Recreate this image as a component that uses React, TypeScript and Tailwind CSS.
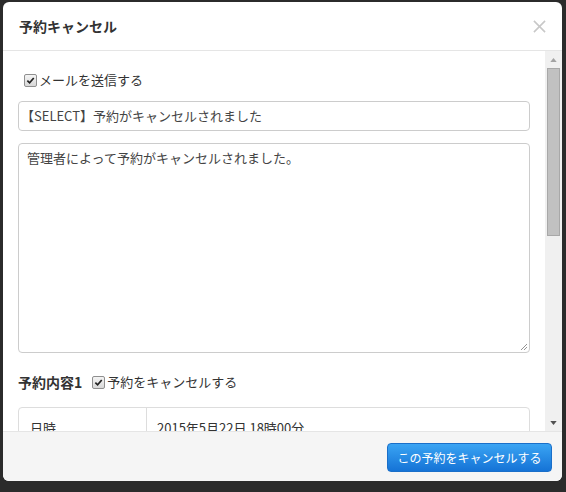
import React from 'react';

const font = { fontFamily: '"Noto Sans CJK JP", "Noto Sans", sans-serif' };

const Check: React.FC = () => (
  <span className="inline-flex h-[13px] w-[13px] shrink-0 items-center justify-center rounded-[2px] border border-[#8f8f8f] bg-gradient-to-b from-[#f4f4f4] to-[#d8d8d8]">
    <svg viewBox="0 0 10 10" className="h-[9px] w-[9px]">
      <path d="M1.5 5.2 L4 7.6 L8.6 2.2" fill="none" stroke="#222" strokeWidth="1.9" />
    </svg>
  </span>
);

export default function App() {
  return (
    <div className="h-[492px] w-[566px] bg-[#2b2b2b] pl-[3px] pt-[2px]" style={font}>
      <div className="flex h-[479px] w-[559px] flex-col overflow-hidden rounded-[6px] bg-white">
        {/* Header */}
        <div className="flex h-[49px] shrink-0 items-center justify-between border-b border-[#e5e5e5] pl-[16px] pr-[16px]">
          <h1 className="text-[14px] font-bold text-[#333]">予約キャンセル</h1>
          <svg viewBox="0 0 14 14" className="h-[13px] w-[13px]">
            <path d="M1 1 L13 13 M13 1 L1 13" stroke="#c8c8c8" strokeWidth="1.7" />
          </svg>
        </div>

        {/* Body */}
        <div className="flex h-[380px] shrink-0">
          <div className="flex-1 overflow-hidden px-[15px] pt-[19px] text-[13px] text-[#333]">
            <label className="flex h-[20px] items-center gap-[2px] pl-[6px]">
              <Check />
              <span>メールを送信する</span>
            </label>
            <div className="mt-[11px] flex h-[30px] items-center rounded-[4px] border border-[#ccc] px-[2px] text-[13px] text-[#444]">
              【SELECT】予約がキャンセルされました
            </div>
            <div className="relative mt-[12px] h-[210px] rounded-[4px] border border-[#ccc] px-[8px] py-[4px] text-[13px] text-[#444]">
              管理者によって予約がキャンセルされました。
              <svg viewBox="0 0 8 8" className="absolute bottom-[1px] right-[1px] h-[8px] w-[8px]">
                <path d="M7 1 L1 7 M7 4 L4 7" stroke="#888" strokeWidth="0.9" />
              </svg>
            </div>
            <div className="mt-[19px] flex h-[20px] items-center">
              <span className="text-[14px] font-bold text-[#333]">予約内容1</span>
              <label className="ml-[10px] flex items-center gap-[2px]">
                <Check />
                <span>予約をキャンセルする</span>
              </label>
            </div>
            <div className="mt-[15px] flex rounded-t-[4px] border border-[#ddd]">
              <div className="w-[128px] border-r border-[#ddd] px-[11px] pb-[8px] pt-[10px]">日時</div>
              <div className="flex-1 px-[10px] pb-[8px] pt-[10px]">2015年5月22日 18時00分</div>
            </div>
          </div>

          {/* Scrollbar */}
          <div className="flex w-[17px] shrink-0 flex-col bg-[#f0f0f0]">
            <div className="flex h-[17px] items-center justify-center">
              <svg viewBox="0 0 8 5" className="h-[4px] w-[7px]">
                <path d="M0 5 L4 0 L8 5 Z" fill="#a3a3a3" />
              </svg>
            </div>
            <div className="mx-[2px] h-[168px] border border-[#a8a8a8] bg-[#c1c1c1]" />
            <div className="flex-1" />
            <div className="flex h-[17px] items-center justify-center">
              <svg viewBox="0 0 8 5" className="h-[4px] w-[7px]">
                <path d="M0 0 L8 0 L4 5 Z" fill="#505050" />
              </svg>
            </div>
          </div>
        </div>

        {/* Footer */}
        <div className="flex flex-1 items-start justify-end border-t border-[#e5e5e5] bg-[#f5f5f5] pr-[10px] pt-[11px]">
          <button className="h-[29px] w-[165px] rounded-[4px] border border-[#1a6fc9] bg-gradient-to-b from-[#3aa4f3] to-[#1573d6] text-[12px] text-white">
            この予約をキャンセルする
          </button>
        </div>
      </div>
    </div>
  );
}
